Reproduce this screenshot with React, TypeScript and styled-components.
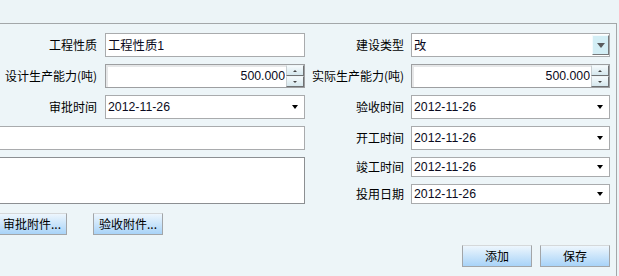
import styled, { createGlobalStyle } from "styled-components";

const GlobalStyle = createGlobalStyle`
  html, body {
    margin: 0;
    padding: 0;
    background: #ecf4f7;
  }
  body {
    font-family: "Noto Sans CJK SC", "Liberation Sans", sans-serif;
    font-size: 12px;
    color: #000;
    overflow: hidden;
  }
`;

const Page = styled.div`
  width: 619px;
  height: 276px;
  display: flex;
  flex-direction: column;
`;

const TopStrip = styled.div`
  height: 23px;
  flex: none;
`;

const Panel = styled.div`
  width: 617px;
  flex: 1;
  box-sizing: border-box;
  border-top: 1px solid #a3a7a9;
  border-right: 1px solid #a3a7a9;
  padding: 9px 6px 0 0;
  background: #edf5f8;
  overflow: hidden;
`;

const Form = styled.div`
  display: grid;
  grid-template-columns: 108px 200px 106px 199px;
  grid-template-rows: 24px 24px 24px 24px 20px 20px;
  row-gap: 7px;
  margin-left: -3px;
`;

const Label = styled.label<{ $pad?: number }>`
  display: flex;
  align-items: center;
  justify-content: flex-end;
  padding-right: ${(p) => p.$pad ?? 8}px;
  white-space: nowrap;
  font-size: 12px;
  line-height: 1;
`;

const Box = styled.div<{ $col?: string; $row?: string; $dark?: boolean }>`
  grid-column: ${(p) => p.$col ?? "auto"};
  grid-row: ${(p) => p.$row ?? "auto"};
  display: flex;
  align-items: center;
  box-sizing: border-box;
  background: #fff;
  border: 1px solid ${(p) => (p.$dark ? "#8c8f92" : "#a9abad")};
  min-width: 0;
`;

const SpinBox = styled(Box)`
  border-color: #9d9fa1;
  box-shadow: inset 2px 2px 0 #e6e7e8;
`;

const Text = styled.input<{ $right?: boolean }>`
  flex: 1;
  min-width: 0;
  border: none;
  outline: none;
  background: transparent;
  padding: 0 ${(p) => (p.$right ? "0" : "2px")};
  text-align: ${(p) => (p.$right ? "right" : "left")};
  font-family: "Liberation Sans", "Noto Sans CJK SC", sans-serif;
  font-size: 12.3px;
  color: #0a0a20;
`;

const Area = styled.textarea`
  flex: 1;
  align-self: stretch;
  border: none;
  outline: none;
  resize: none;
  background: transparent;
`;

const DropArrow = styled.span`
  width: 0;
  height: 0;
  margin-right: 6px;
  border-left: 3.5px solid transparent;
  border-right: 3.5px solid transparent;
  border-top: 4px solid #000;
`;

const ComboButton = styled.span`
  width: 17px;
  height: 20px;
  margin-right: 0;
  box-sizing: border-box;
  display: flex;
  align-items: center;
  justify-content: center;
  background: #d3eef5;
  border: 1px solid;
  border-color: #f4fbfd #77797b #77797b #f4fbfd;
  &::after {
    content: "";
    border-left: 4px solid transparent;
    border-right: 4px solid transparent;
    border-top: 5px solid #595b5d;
  }
`;

const Spin = styled.span`
  width: 18px;
  align-self: stretch;
  display: flex;
  flex-direction: column;
  margin-left: 1px;
`;

const SpinHalf = styled.span<{ $up?: boolean }>`
  flex: 1;
  box-sizing: border-box;
  display: flex;
  align-items: center;
  justify-content: center;
  background: linear-gradient(#f5fafc, #d5e7ed);
  border: 1px solid;
  border-color: #eef5f7 #6f7173 #6f7173 #c9cfd2;
  &::after {
    content: "";
    border-left: 2px solid transparent;
    border-right: 2px solid transparent;
    ${(p) =>
      p.$up ? "border-bottom: 2px solid #444;" : "border-top: 2px solid #444;"}
  }
`;

const AttachRow = styled.div`
  display: flex;
  gap: 26px;
  margin: 9px 0 0 -3px;
`;

const Footer = styled.div`
  display: flex;
  justify-content: flex-end;
  gap: 8px;
  margin-top: 10px;
`;

const Btn = styled.button`
  width: 70px;
  height: 22px;
  box-sizing: border-box;
  padding: 0;
  border: 1px solid #a2a5a8;
  border-top-color: #d5d8da;
  background: linear-gradient(#edf6fd, #a8d3f8);
  font-family: "Noto Sans CJK SC", sans-serif;
  font-size: 12px;
  color: #000;
  line-height: 1;
`;

const DateField = ({ value }: { value: string }) => (
  <Box>
    <Text readOnly defaultValue={value} />
    <DropArrow />
  </Box>
);

const SpinField = ({ value }: { value: string }) => (
  <SpinBox>
    <Text $right readOnly defaultValue={value} />
    <Spin>
      <SpinHalf $up />
      <SpinHalf />
    </Spin>
  </SpinBox>
);

export default function App() {
  return (
    <>
      <GlobalStyle />
      <Page>
        <TopStrip />
        <Panel>
          <Form>
            <Label>工程性质</Label>
            <Box>
              <Text readOnly defaultValue="工程性质1" />
            </Box>
            <Label $pad={7}>建设类型</Label>
            <Box>
              <Text readOnly defaultValue="改" />
              <ComboButton />
            </Box>

            <Label>设计生产能力(吨)</Label>
            <SpinField value="500.000" />
            <Label $pad={7}>实际生产能力(吨)</Label>
            <SpinField value="500.000" />

            <Label>审批时间</Label>
            <DateField value="2012-11-26" />
            <Label $pad={7}>验收时间</Label>
            <DateField value="2012-11-26" />

            <Box $col="1 / 3">
              <Text readOnly defaultValue="" />
            </Box>
            <Label $pad={7}>开工时间</Label>
            <DateField value="2012-11-26" />

            <Box $col="1 / 3" $row="5 / 7" $dark>
              <Area readOnly />
            </Box>
            <Label $pad={7}>竣工时间</Label>
            <DateField value="2012-11-26" />
            <Label $pad={7}>投用日期</Label>
            <DateField value="2012-11-26" />
          </Form>

          <AttachRow>
            <Btn>审批附件...</Btn>
            <Btn>验收附件...</Btn>
          </AttachRow>

          <Footer>
            <Btn>添加</Btn>
            <Btn>保存</Btn>
          </Footer>
        </Panel>
      </Page>
    </>
  );
}
